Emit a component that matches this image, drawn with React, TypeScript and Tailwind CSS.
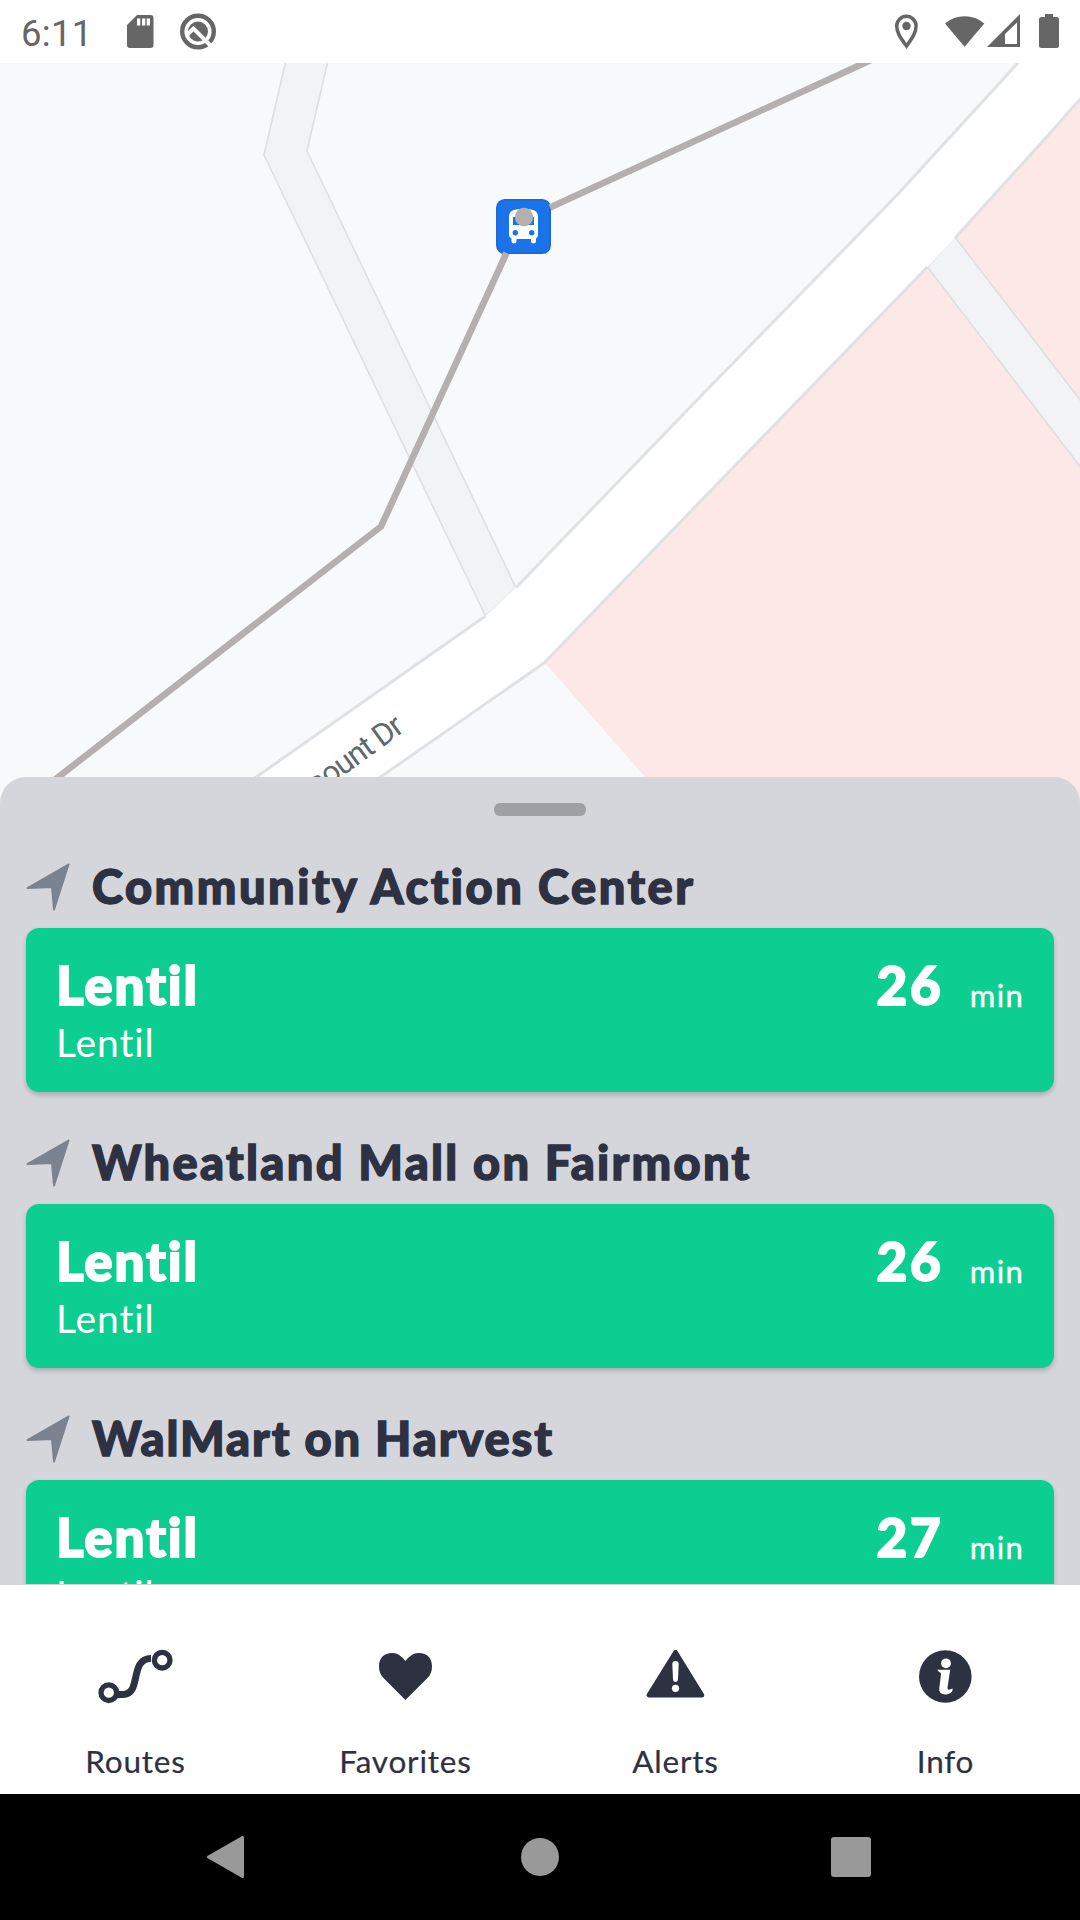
import type { ReactNode } from "react";

interface Stop {
  id: number;
  name: string;
  route: string;
  direction: string;
  minutes: number;
  nameClass: string;
}

const stops: Stop[] = [
  { id: 1, name: "Community Action Center", route: "Lentil", direction: "Lentil", minutes: 26, nameClass: "tracking-[2.5px]" },
  { id: 2, name: "Wheatland Mall on Fairmont", route: "Lentil", direction: "Lentil", minutes: 26, nameClass: "tracking-[2.3px]" },
  { id: 3, name: "WalMart on Harvest", route: "Lentil", direction: "Lentil", minutes: 27, nameClass: "tracking-[1.9px]" },
];

function StatusBar() {
  return (
    <header className="flex h-[63px] shrink-0 items-center bg-white pl-[21px] pr-[21px] text-[#666666]">
      <span className="mt-[5px] font-[Roboto,sans-serif] text-[36.500px] leading-none tracking-[0.3px]">6:11</span>
      <svg className="ml-auto h-[63px] w-[960px]" viewBox="99 0 960 63" fill="#666666">
        {/* sd card */}
        <path fillRule="evenodd" d="M137 15h13.500a3 3 0 0 1 3 3v27a3 3 0 0 1-3 3h-20.500a3 3 0 0 1-3-3v-20zM137 18.500v7h3.300v-7zM142 18.500v7h3.300v-7zM146.700 18.500v7h3.300v-7z" />
        {/* notification badge */}
        <circle cx="198" cy="31.500" r="15.800" fill="none" stroke="#666666" strokeWidth="4.400" />
        <circle cx="198" cy="31.500" r="10" />
        <path d="M187.500 34.500 193.500 28.500 210.500 45.500" fill="none" stroke="#fff" strokeWidth="4" />
        {/* location */}
        <path d="M906.500 46C901 38.500 896.700 33 896.700 26a9.700 9.700 0 0 1 19.400 0c0 7-4.300 12.500-9.600 20z" fill="none" stroke="#666666" strokeWidth="3.500" />
        <circle cx="906.500" cy="26" r="4.200" />
        {/* wifi */}
        <path d="M945 23.500a30 30 0 0 1 39.300 0L964.600 46.700z" />
        {/* signal */}
        <path fillRule="evenodd" d="M1020 14v33h-33zM1017 22.500 1005 34v10h12z" />
        {/* battery */}
        <path d="M1045 17v-3h8v3h3.500a2.500 2.500 0 0 1 2.500 2.500v26a2.500 2.500 0 0 1-2.500 2.500h-15a2.500 2.500 0 0 1-2.500-2.500v-26a2.500 2.500 0 0 1 2.500-2.500z" />
      </svg>
    </header>
  );
}

function MapView() {
  return (
    <svg className="block h-[750px] w-full shrink-0" viewBox="0 63 1080 750">
      <rect y="63" width="1080" height="750" fill="#f8f9fb" />
      {/* commercial area */}
      <path d="M544 662 722 478 928 266 956 237 1052 130 1080 98V813H677z" fill="#fce8e6" />
      {/* service roads */}
      <g fill="#f1f3f4" stroke="#dddfe2" strokeWidth="1.600">
        <path d="M290 43 264 155 485.500 616 516 588 307 151 332 43z" />
        <path d="M927.500 267 1100 492.500V426L955 237z" />
      </g>
      {/* main road */}
      <path d="M1018 63 995 89 897 195 700 397 516 587.500 485.500 616 205 813H329L544 663 722 479 927.500 267 955 238 1052 131 1100 77V40z" fill="#fff" />
      <g fill="none" stroke="#dfe1e4" strokeWidth="3">
        <path d="M1036 43 995 88 897 195 700 397 516 587.500" />
        <path d="M485.500 616 205 813" />
        <path d="M329 813 544 663 722 479 927.500 267" />
        <path d="M955 238 1052 131 1090 88" />
      </g>
      <text
        transform="translate(405 731) rotate(-36)"
        textAnchor="end"
        fontSize="31"
        fill="#5f696d"
        className="font-[Roboto,sans-serif] tracking-[-1px]"
      >
        Fairmount Dr
      </text>
      {/* bus stop marker */}
      <rect x="496.800" y="199.800" width="53.400" height="53.400" rx="8" fill="#1a73e8" stroke="#2068cf" strokeWidth="1.600" />
      <path
        fillRule="evenodd"
        fill="#fff"
        d="M509 217q0-7 7-7.500 7.500-1.500 15 0 7 .5 7 7.500v18q0 2.500-2 3.500v3q0 2-2.500 2t-2.500-2v-2.500h-14.500v2.500q0 2-2.500 2t-2.500-2v-3q-2.500-1-2.500-3.500zM513 217v8h21v-8z"
      />
      <circle cx="515.300" cy="232.700" r="2.700" fill="#1a73e8" />
      <circle cx="531.700" cy="232.700" r="2.700" fill="#1a73e8" />
      {/* route */}
      <path d="M895 49 550 207.500" fill="none" stroke="#b5b0b0" strokeWidth="6.600" />
      <path d="M506.500 253 381 526.500 12 813" fill="none" stroke="#b5b0b0" strokeWidth="6.600" />
      <circle cx="524" cy="217" r="9.200" fill="#b5b0b0" />
    </svg>
  );
}

function StopSection({ stop }: { stop: Stop }) {
  return (
    <section className="mb-[26px] shrink-0">
      <div className="flex h-[86px] items-center">
        <svg className="mt-1 h-[48px] w-[44px] shrink-0" viewBox="26 863 44 48">
          <path d="M68.500 864.500 27.500 888 52 887 54 909.500z" fill="#7b8290" stroke="#7b8290" strokeWidth="2" strokeLinejoin="round" />
        </svg>
        <h2 className={`ml-[22px] mt-[2px] whitespace-nowrap text-[47px] font-black leading-none text-[#2d3142] [-webkit-text-stroke:1.400px_#2d3142] ${stop.nameClass}`}>
          {stop.name}
        </h2>
      </div>
      <div className="flex h-[164px] items-start rounded-[13px] bg-[#0dce91] pl-[30px] pr-[30px] pt-[27px] text-white shadow-[0_3px_5px_rgba(0,0,0,0.2)]">
        <div className="flex-1">
          <p className="text-[53px] font-black leading-[60px] tracking-[1.8px] [-webkit-text-stroke:1.800px_white]">{stop.route}</p>
          <p className="text-[39px] leading-[54px] tracking-[0.9px]">{stop.direction}</p>
        </div>
        <p className="text-[53px] font-black leading-[60px] tracking-[3px] [-webkit-text-stroke:1.800px_white]">{stop.minutes}</p>
        <p className="ml-[26px] mt-[20px] text-[31px] leading-[40px] tracking-[1.3px] [-webkit-text-stroke:0.400px_white]">min</p>
      </div>
    </section>
  );
}

function Tab({ label, children }: { label: string; children: ReactNode }) {
  return (
    <button className="flex flex-col items-center pt-[51px] text-[#2d3142]">
      <svg className="h-20 w-20" viewBox="0 0 80 80" fill="#2d3142">
        {children}
      </svg>
      <span className="mt-[25px] pl-px text-[31.500px] leading-[40px] tracking-[0.8px] [-webkit-text-stroke:0.200px_#2d3142]">{label}</span>
    </button>
  );
}

function TabBar() {
  return (
    <nav className="grid h-[210px] shrink-0 grid-cols-4 border-t border-[#d2d3d6] bg-white">
      <Tab label="Routes">
        <path d="M22 58.500h6C47 58.500 34 22.500 56 22.500" fill="none" stroke="#2d3142" strokeWidth="7" />
        <circle cx="13.800" cy="56.700" r="7.800" fill="#fff" stroke="#2d3142" strokeWidth="5.300" />
        <circle cx="67.200" cy="24.200" r="7.800" fill="#fff" stroke="#2d3142" strokeWidth="5.300" />
      </Tab>
      <Tab label="Favorites">
        <path d="M40.400 64 18 41.500C15.500 39 14 35 14 30.500 14 22 19 17 27 17c6 0 9.500 3.500 13.400 8C44.500 20.500 48 17 54 17c8 0 13 5 13 13.500 0 4.500-1.500 8.500-4 11z" />
      </Tab>
      <Tab label="Alerts">
        <path d="M40.500 16.200 13.800 59.200H67z" stroke="#2d3142" strokeWidth="4.500" strokeLinejoin="round" />
        <path d="M37.300 28q0-3 3.200-3t3.200 3l-.7 15q-.2 3-2.500 3t-2.500-3z" fill="#fff" />
        <circle cx="40.500" cy="52.300" r="3.600" fill="#fff" />
      </Tab>
      <Tab label="Info">
        <circle cx="40.300" cy="40.500" r="26.300" />
        <circle cx="41" cy="27.300" r="4.900" fill="#fff" />
        <path d="M32.200 33.800H45.200L42.500 51.500q-.2 2.500 1.500 2.300l3.700-1.300q.3 5.700-7.300 5.900-6.600-.2-6.200-5.300L36 38.500q.2-2-1.800-2.400z" fill="#fff" />
      </Tab>
    </nav>
  );
}

function SystemBar() {
  return (
    <div className="flex h-[126px] shrink-0 items-center bg-black">
      <svg className="h-[126px] w-full" viewBox="0 1794 1080 126" fill="#999999">
        <path d="M208.500 1857 242.500 1837.500V1876.500z" stroke="#999999" strokeWidth="3" strokeLinejoin="round" />
        <circle cx="540" cy="1857" r="19" />
        <rect x="831" y="1837" width="40" height="40" rx="3" />
      </svg>
    </div>
  );
}

export default function App() {
  return (
    <div className="flex h-[1920px] w-[1080px] flex-col overflow-hidden bg-white font-[Lato,sans-serif]">
      <StatusBar />
      <MapView />
      <main className="relative -mt-[36px] flex h-[807px] shrink-0 flex-col overflow-hidden rounded-t-[26px] bg-[#d5d6dc] px-[26px]">
        <div className="mx-auto mb-[26px] mt-[26px] h-[13px] w-[92px] shrink-0 rounded-[6px] bg-[#9fa0a4]" />
        {stops.map((stop) => (
          <StopSection key={stop.id} stop={stop} />
        ))}
      </main>
      <TabBar />
      <SystemBar />
    </div>
  );
}
